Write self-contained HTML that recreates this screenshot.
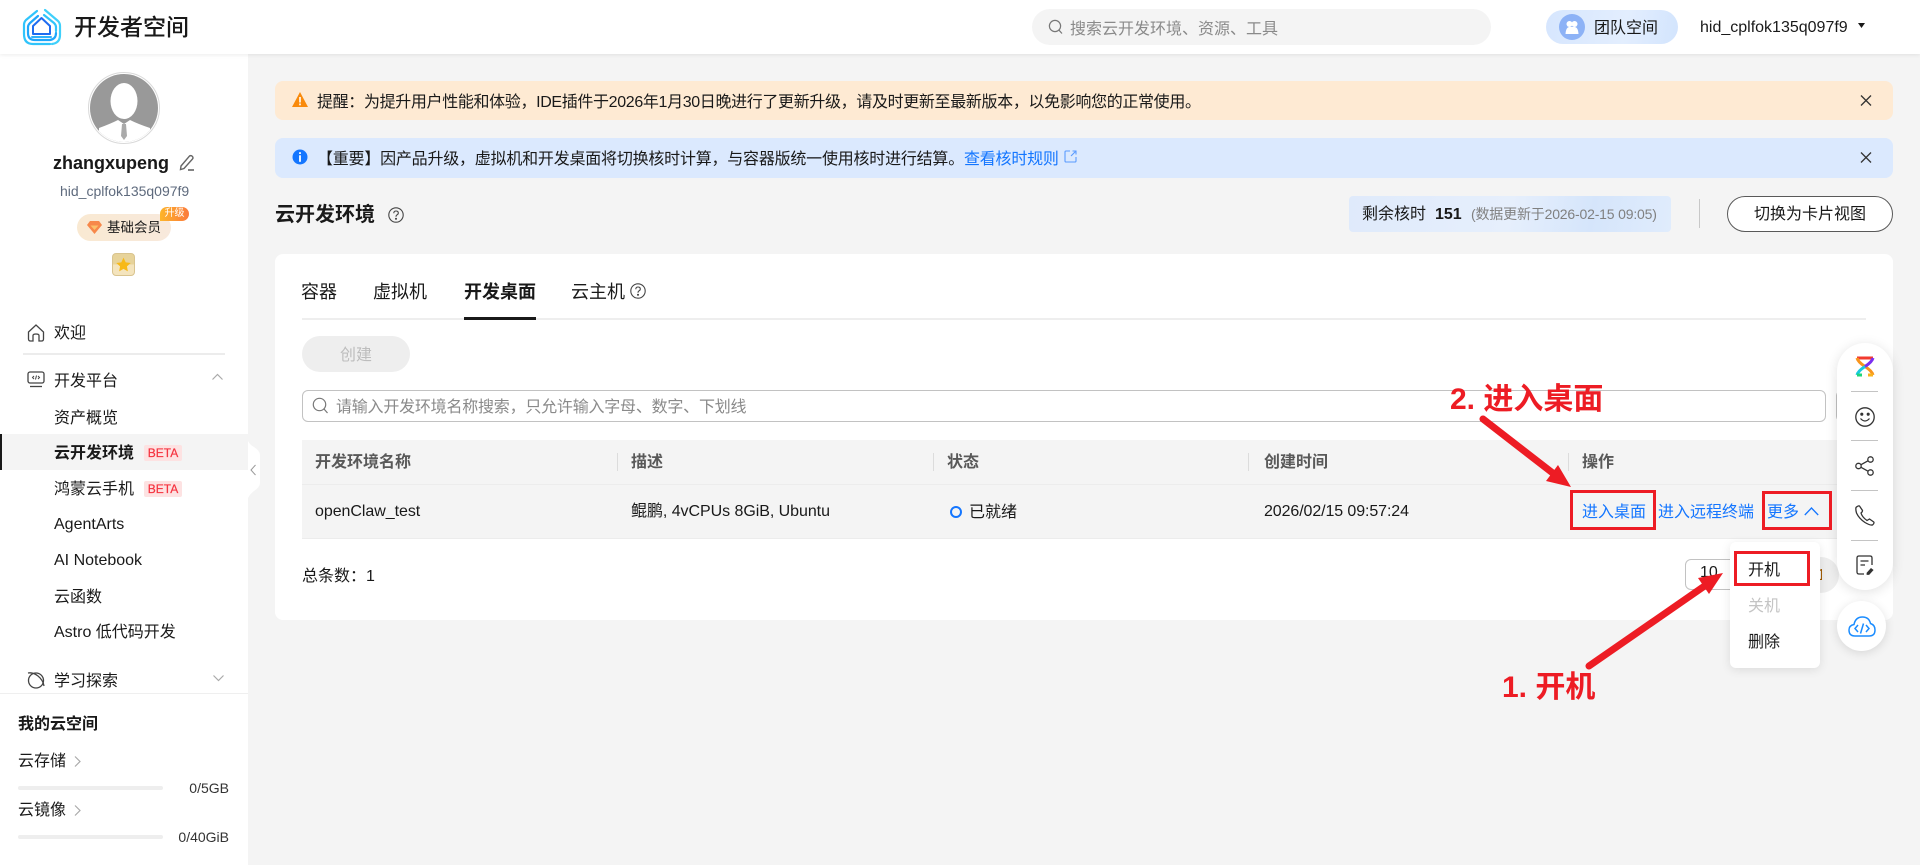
<!DOCTYPE html>
<html lang="zh-CN">
<head>
<meta charset="utf-8">
<title>开发者空间</title>
<style>
*{box-sizing:border-box;margin:0;padding:0}
html,body{width:1920px;height:865px;overflow:hidden;background:#f4f4f4}
body{position:relative;font-family:"Liberation Sans","Noto Sans CJK SC",sans-serif;font-size:16px;color:#191919}
.a{position:absolute}
.t{position:absolute;white-space:nowrap;line-height:20px;height:20px}
.b{font-weight:700}
.beta{position:absolute;left:144px;width:38px;height:16px;background:#fde2e2;color:#f5323f;font-size:12px;line-height:16px;text-align:center;border-radius:2px;-webkit-text-stroke:.2px #f5323f}
.th{color:#595959;font-weight:700}
.sep{position:absolute;width:1px;background:#dcdcdc}
.lnk{color:#1476ff}
.rb{position:absolute;border:3px solid #ed1c24}
.red{position:absolute;white-space:nowrap;color:#ed1c24;font-weight:700;font-size:30px;line-height:36px;height:36px}
.fd{position:absolute;left:1851px;width:27px;height:1px;background:#c4c4c4}
svg{position:absolute;overflow:visible}
</style>
</head>
<body>

<!-- sidebar -->
<div class="a" style="left:0;top:54px;width:248px;height:811px;background:#fff"></div>

<!-- header -->
<div class="a" style="left:0;top:0;width:1920px;height:54px;background:#fff;box-shadow:0 1px 4px rgba(0,0,0,.08)"></div>
<svg style="left:23px;top:9px" width="38" height="36" viewBox="0 0 38 36" fill="none" stroke-linejoin="round" stroke-linecap="round">
<path d="M14 2 L3 11 Q1 13 1 16 V25 Q1 35 10 35 H24 Q27 35 27 35" stroke="#30c4fb" stroke-width="2.200"/>
<path d="M22 1 L35 12 Q37 14 37 17 V26 Q37 34 29 35" stroke="#3fd0fb" stroke-width="2.200"/>
<path d="M15 7 L7 14 Q5 16 5 18 V24 Q5 31 12 31 H27 Q33 30 33 24" stroke="#1ea6fb" stroke-width="2.200"/>
<path d="M21 6 L31 14 Q33 16 33 18 V22" stroke="#30c4fb" stroke-width="2.200"/>
<path d="M10 25 V17 L18.500 9 L27 17 V25 Z" stroke="#1e6cf0" stroke-width="2"/>
<path d="M9 28 H28" stroke="#2fb2fb" stroke-width="2"/>
</svg>
<div class="t" style="left:74px;top:14px;height:26px;line-height:26px;font-size:23px;font-weight:500;color:#191919">开发者空间</div>

<div class="a" style="left:1032px;top:9px;width:459px;height:36px;background:#f4f4f4;border-radius:18px"></div>
<svg style="left:1048px;top:19px" width="16" height="16" viewBox="0 0 16 16" fill="none" stroke="#777" stroke-width="1.200"><circle cx="7" cy="7" r="5.600"/><path d="M11 11.200 L14 14.500"/></svg>
<div class="t" style="left:1070px;top:20px;color:#8a8a8a">搜索云开发环境、资源、工具</div>

<div class="a" style="left:1546px;top:10px;width:132px;height:34px;border-radius:17px;background:linear-gradient(100deg,#d6e6fe,#e3eefe 60%,#d2e4fd)"></div>
<div class="a" style="left:1559px;top:14px;width:26px;height:26px;border-radius:50%;background:#8db2f6"></div>
<svg style="left:1564px;top:19px" width="16" height="16" viewBox="0 0 16 16" fill="#fff"><circle cx="5.500" cy="5" r="3"/><circle cx="10.500" cy="5" r="3"/><path d="M1.500 15 Q2 8 5.500 8 H10.500 Q14 8 14.500 15 Z"/></svg>
<div class="t" style="left:1594px;top:19px;color:#191919">团队空间</div>
<div class="t" style="left:1700px;top:18px;color:#191919;font-size:16px">hid_cplfok135q097f9</div>
<svg style="left:1858px;top:23px" width="7" height="5" viewBox="0 0 7 5"><path d="M0 0 H7 L3.500 5 Z" fill="#191919"/></svg>

<!-- profile -->
<div class="a" style="left:88px;top:72px;width:72px;height:72px;border-radius:50%;border:1px solid #d9d9d9;background:#fff"></div>
<svg style="left:90px;top:74px" width="68" height="68" viewBox="0 0 68 68">
<clipPath id="av"><circle cx="34" cy="34" r="34"/></clipPath>
<g clip-path="url(#av)"><rect width="68" height="68" fill="#999"/>
<ellipse cx="34" cy="27" rx="13.500" ry="18" fill="#fff"/>
<path d="M9 68 V54 Q20 50 28 46 L34 50 L40 46 Q48 50 60 54 V68 Z" fill="#fff"/>
<path d="M32 50 H36 L37 62 L34 66 L31 62 Z" fill="#aaa"/></g>
</svg>
<div class="t b" style="left:53px;top:153px;font-size:18px;color:#191919">zhangxupeng</div>
<svg style="left:179px;top:154px" width="16" height="17" viewBox="0 0 16 17" fill="none" stroke="#666" stroke-width="1.400"><path d="M2 12 L10.500 2 Q12 1 13.500 2.500 Q14.500 4 13.500 5 L5 14.500 L1.500 15.500 Z"/><path d="M9 16 H15" stroke-width="1.600"/></svg>
<div class="t" style="left:60px;top:181px;font-size:14px;color:#5e6a7d">hid_cplfok135q097f9</div>
<div class="a" style="left:77px;top:214px;width:94px;height:27px;border-radius:14px;background:linear-gradient(90deg,#f9e9d2,#f8e9dc)"></div>
<svg style="left:87px;top:221px" width="15" height="13" viewBox="0 0 15 13"><path d="M3 0 H12 L15 4 L7.500 13 L0 4 Z" fill="#f7884a"/><path d="M3.500 4.500 H11.500 L7.500 9 Z" fill="#fbc06a"/></svg>
<div class="t" style="left:107px;top:218px;font-size:13.500px;color:#191919">基础会员</div>
<div class="a" style="left:160px;top:207px;width:29px;height:14px;border-radius:7px 7px 7px 0;background:linear-gradient(90deg,#fdb52a,#fb7a3c);color:#fff;font-size:10px;line-height:14px;text-align:center">升级</div>
<div class="a" style="left:112px;top:253px;width:23px;height:23px;border-radius:4px;border:1px solid #d9c48f;background:linear-gradient(180deg,#e7d39a 50%,#f4e4bd 50%)"></div>
<svg style="left:116px;top:257px" width="15" height="15" viewBox="0 0 24 24"><path d="M12 1 L15.500 8.500 L23.500 9.500 L17.500 15 L19 23 L12 19 L5 23 L6.500 15 L.5 9.500 L8.500 8.500 Z" fill="#f7b917"/></svg>

<!-- menu -->
<svg style="left:27px;top:324px" width="18" height="18" viewBox="0 0 18 18" fill="none" stroke="#444" stroke-width="1.300"><path d="M1.500 8 L9 1 L16.500 8 V15 Q16.500 17 14.500 17 H12 V11.500 Q12 10 9 10 Q6 10 6 11.500 V17 H3.500 Q1.500 17 1.500 15 Z"/></svg>
<div class="t" style="left:54px;top:324px">欢迎</div>
<div class="a" style="left:23px;top:353px;width:202px;height:2px;background:#ececec"></div>
<svg style="left:27px;top:371px" width="18" height="17" viewBox="0 0 18 17" fill="none" stroke="#444" stroke-width="1.300"><rect x="1" y="1" width="16" height="11" rx="2"/><path d="M3 15.500 H15"/><path d="M7 5 L5.500 6.500 L7 8 M11 5 L12.500 6.500 L11 8 M9.500 4.500 L8.500 8.500" stroke-width="1"/></svg>
<div class="t" style="left:54px;top:372px">开发平台</div>
<svg style="left:212px;top:374px" width="11" height="6" viewBox="0 0 11 6" fill="none" stroke="#aaa" stroke-width="1.200"><path d="M.5 5.500 L5.500 .5 L10.500 5.500"/></svg>
<div class="t" style="left:54px;top:409px">资产概览</div>
<div class="a" style="left:0;top:434px;width:248px;height:36px;background:#f4f4f4"></div>
<div class="a" style="left:0;top:434px;width:2px;height:36px;background:#191919"></div>
<div class="t b" style="left:54px;top:444px">云开发环境</div>
<div class="beta" style="top:445px">BETA</div>
<div class="t" style="left:54px;top:480px">鸿蒙云手机</div>
<div class="beta" style="top:481px">BETA</div>
<div class="t" style="left:54px;top:515px">AgentArts</div>
<div class="t" style="left:54px;top:551px">AI Notebook</div>
<div class="t" style="left:54px;top:588px">云函数</div>
<div class="t" style="left:54px;top:623px">Astro 低代码开发</div>
<svg style="left:27px;top:671px" width="18" height="18" viewBox="0 0 18 18" fill="none" stroke="#444" stroke-width="1.300"><circle cx="9" cy="9.500" r="7.500"/><path d="M1 2 Q6 1 11 5 Q16 9 17 15" /></svg>
<div class="t" style="left:54px;top:672px">学习探索</div>
<svg style="left:213px;top:675px" width="11" height="6" viewBox="0 0 11 6" fill="none" stroke="#aaa" stroke-width="1.200"><path d="M.5 .5 L5.500 5.500 L10.500 .5"/></svg>

<div class="a" style="left:0;top:693px;width:248px;height:172px;background:#fff;border-top:1px solid #efefef"></div>
<div class="t b" style="left:18px;top:715px">我的云空间</div>
<div class="t" style="left:18px;top:752px">云存储</div>
<svg style="left:74px;top:756px" width="7" height="11" viewBox="0 0 7 11" fill="none" stroke="#aaa" stroke-width="1.200"><path d="M1 .5 L6 5.500 L1 10.500"/></svg>
<div class="a" style="left:18px;top:786px;width:145px;height:4px;border-radius:2px;background:#eeeeee"></div>
<div class="t" style="right:1691px;top:778px;font-size:14px;color:#333">0/5GB</div>
<div class="t" style="left:18px;top:801px">云镜像</div>
<svg style="left:74px;top:805px" width="7" height="11" viewBox="0 0 7 11" fill="none" stroke="#aaa" stroke-width="1.200"><path d="M1 .5 L6 5.500 L1 10.500"/></svg>
<div class="a" style="left:18px;top:835px;width:145px;height:4px;border-radius:2px;background:#eeeeee"></div>
<div class="t" style="right:1691px;top:827px;font-size:14px;color:#333">0/40GiB</div>

<!-- collapse tab -->
<svg style="left:248px;top:441px" width="12" height="57" viewBox="0 0 12 57"><path d="M0 0 Q2 4 6 6 Q12 10 12 14 V42 Q12 46 6 50 Q2 53 0 57 Z" fill="#fff"/><path d="M7.500 24 L3 29 L7.500 34" fill="none" stroke="#999" stroke-width="1"/></svg>

<!-- alerts -->
<div class="a" style="left:275px;top:81px;width:1618px;height:39px;background:#feead3;border-radius:8px"></div>
<svg style="left:292px;top:92px" width="16" height="15" viewBox="0 0 16 15"><path d="M8 0 L16 15 H0 Z" fill="#f98a0b"/><rect x="7.200" y="5" width="1.600" height="5.500" fill="#fff"/><rect x="7.200" y="11.500" width="1.600" height="1.800" fill="#fff"/></svg>
<div class="t" style="left:317px;top:93px;color:#191919;letter-spacing:-.35px">提醒：为提升用户性能和体验，IDE插件于2026年1月30日晚进行了更新升级，请及时更新至最新版本，以免影响您的正常使用。</div>
<svg style="left:1860px;top:95px" width="12" height="11" viewBox="0 0 12 11" stroke="#333" stroke-width="1.300"><path d="M1 .5 L11 10.500 M11 .5 L1 10.500"/></svg>

<div class="a" style="left:275px;top:138px;width:1618px;height:40px;background:#dbe9fe;border-radius:8px"></div>
<svg style="left:292px;top:149px" width="16" height="16" viewBox="0 0 16 16"><circle cx="8" cy="8" r="7.500" fill="#1476ff"/><rect x="7.100" y="3.200" width="1.800" height="1.800" fill="#fff"/><rect x="7.100" y="6.300" width="1.800" height="6.500" fill="#fff"/></svg>
<div class="t" style="left:317px;top:150px;color:#191919;letter-spacing:-.22px">【重要】因产品升级，虚拟机和开发桌面将切换核时计算，与容器版统一使用核时进行结算。<span class="lnk">查看核时规则</span></div>
<svg style="left:1064px;top:150px" width="13" height="13" viewBox="0 0 13 13" fill="none" stroke="#5a9bff" stroke-width="1.100"><path d="M6 1 H2 Q1 1 1 2 V11 Q1 12 2 12 H11 Q12 12 12 11 V7"/><path d="M7 6 L12 1 M8.500 1 H12 V4.500"/></svg>
<svg style="left:1860px;top:152px" width="12" height="11" viewBox="0 0 12 11" stroke="#333" stroke-width="1.300"><path d="M1 .5 L11 10.500 M11 .5 L1 10.500"/></svg>

<!-- title row -->
<div class="t b" style="left:275px;top:203px;height:24px;line-height:24px;font-size:20px;color:#191919">云开发环境</div>
<svg style="left:388px;top:207px" width="16" height="16" viewBox="0 0 16 16" fill="none" stroke="#444" stroke-width="1.100"><circle cx="8" cy="8" r="7.200"/><path d="M5.800 6.200 Q5.800 4 8 4 Q10.300 4 10.300 6 Q10.300 7.300 8.800 8 Q8 8.400 8 9.800"/><circle cx="8" cy="11.800" r=".5" fill="#444"/></svg>

<div class="a" style="left:1349px;top:196px;width:322px;height:36px;border-radius:4px;background:linear-gradient(100deg,#dfeafb,#e6effc 50%,#d5e5fb 75%,#e0ecfc)"></div>
<div class="t" style="left:1362px;top:205px">剩余核时</div>
<div class="t b" style="left:1435px;top:205px">151</div>
<div class="t" style="left:1471px;top:204px;font-size:14px;color:#808080;letter-spacing:-.18px">(数据更新于2026-02-15 09:05)</div>
<div class="a" style="left:1699px;top:199px;width:1px;height:29px;background:#c8c8c8"></div>
<div class="a" style="left:1727px;top:196px;width:166px;height:36px;border:1px solid #595959;border-radius:18px;background:#fff;text-align:center;line-height:36px;color:#191919">切换为卡片视图</div>

<!-- card -->
<div class="a" style="left:275px;top:254px;width:1618px;height:366px;background:#fff;border-radius:8px"></div>
<div class="t" style="left:301px;top:280px;height:24px;line-height:24px;font-size:18px">容器</div>
<div class="t" style="left:373px;top:280px;height:24px;line-height:24px;font-size:18px">虚拟机</div>
<div class="t b" style="left:464px;top:280px;height:24px;line-height:24px;font-size:18px">开发桌面</div>
<div class="t" style="left:571px;top:280px;height:24px;line-height:24px;font-size:18px">云主机</div>
<svg style="left:630px;top:283px" width="16" height="16" viewBox="0 0 16 16" fill="none" stroke="#444" stroke-width="1.100"><circle cx="8" cy="8" r="7.200"/><path d="M5.800 6.200 Q5.800 4 8 4 Q10.300 4 10.300 6 Q10.300 7.300 8.800 8 Q8 8.400 8 9.800"/><circle cx="8" cy="11.800" r=".5" fill="#444"/></svg>
<div class="a" style="left:302px;top:318px;width:1564px;height:2px;background:#eeeeee"></div>
<div class="a" style="left:464px;top:317px;width:72px;height:3px;background:#191919"></div>

<div class="a" style="left:302px;top:336px;width:108px;height:36px;border-radius:18px;background:#eeeeee;text-align:center;line-height:39px;color:#bdbdbd">创建</div>

<div class="a" style="left:302px;top:390px;width:1524px;height:32px;border:1px solid #c2c2c2;border-radius:6px;background:#fff"></div>
<svg style="left:312px;top:397px" width="17" height="17" viewBox="0 0 17 17" fill="none" stroke="#777" stroke-width="1.200"><circle cx="7.500" cy="7.500" r="6.200"/><path d="M12 12 L15.500 16"/></svg>
<div class="t" style="left:336px;top:398px;color:#8a8a8a;letter-spacing:-.22px">请输入开发环境名称搜索，只允许输入字母、数字、下划线</div>
<div class="a" style="left:1836px;top:390px;width:30px;height:32px;border:1px solid #c2c2c2;border-radius:6px;background:#fff"></div>

<!-- table -->
<div class="a" style="left:302px;top:440px;width:1564px;height:99px;background:#f4f4f4;border-bottom:1px solid #ececec"></div>
<div class="a" style="left:302px;top:484px;width:1564px;height:1px;background:#ececec"></div>
<div class="t th" style="left:315px;top:453px">开发环境名称</div>
<div class="sep" style="left:617px;top:453px;height:18px"></div>
<div class="t th" style="left:631px;top:453px">描述</div>
<div class="sep" style="left:933px;top:453px;height:18px"></div>
<div class="t th" style="left:947px;top:453px">状态</div>
<div class="sep" style="left:1248px;top:453px;height:18px"></div>
<div class="t th" style="left:1264px;top:453px">创建时间</div>
<div class="sep" style="left:1568px;top:453px;height:18px"></div>
<div class="t th" style="left:1582px;top:453px">操作</div>

<div class="t" style="left:315px;top:502px;letter-spacing:-.05px">openClaw_test</div>
<div class="t" style="left:631px;top:502px;letter-spacing:-.05px">鲲鹏, 4vCPUs 8GiB, Ubuntu</div>
<div class="a" style="left:950px;top:506px;width:12px;height:12px;border:2.500px solid #1476ff;border-radius:50%"></div>
<div class="t" style="left:969px;top:503px">已就绪</div>
<div class="t" style="left:1264px;top:502px;letter-spacing:-.1px">2026/02/15 09:57:24</div>
<div class="t lnk" style="left:1582px;top:503px">进入桌面</div>
<div class="t lnk" style="left:1658px;top:503px">进入远程终端</div>
<div class="t lnk" style="left:1767px;top:503px">更多</div>
<svg style="left:1804px;top:507px" width="15" height="9" viewBox="0 0 15 9" fill="none" stroke="#1476ff" stroke-width="1.300"><path d="M.8 8 L7.500 1 L14.200 8"/></svg>

<div class="t" style="left:302px;top:567px;color:#191919">总条数：1</div>

<!-- pagination -->
<div class="a" style="left:1685px;top:559px;width:60px;height:31px;border:1px solid #c2c2c2;border-radius:6px;background:#fff"></div>
<div class="t" style="left:1700px;top:563px">10</div>
<div class="a" style="left:1803px;top:557px;width:36px;height:36px;border-radius:50%;background:#eeeeee"></div>
<div class="t" style="left:1817px;top:566px;overflow:hidden;width:5px;color:#a05a00">1</div>

<!-- dropdown -->
<div class="a" style="left:1730px;top:542px;width:90px;height:126px;background:#fff;border-radius:6px;box-shadow:0 2px 10px rgba(0,0,0,.10)"></div>
<div class="t" style="left:1748px;top:561px">开机</div>
<div class="t" style="left:1748px;top:597px;color:#c4c4c4">关机</div>
<div class="t" style="left:1748px;top:633px">删除</div>

<!-- floating bar -->
<div class="a" style="left:1837px;top:343px;width:56px;height:247px;border-radius:28px;background:#fff;box-shadow:0 2px 12px rgba(0,0,0,.12)"></div>
<svg style="left:1855px;top:356px" width="20" height="21" viewBox="0 0 20 21" fill="none" stroke-width="3">
<path d="M2 2 H18" stroke="#f23a2f"/>
<path d="M2 2 Q3 6 10 10.500 Q17 15 18 19" stroke="#f9951d"/>
<path d="M18 2 Q17 6 10 10.500" stroke="#7b2ff0"/>
<path d="M10 10.500 Q3 15 2 19" stroke="#19c9e0"/>
<path d="M2 19 H7" stroke="#1ed67a"/>
<path d="M13 19 H18" stroke="#f9b31d"/>
</svg>
<div class="fd" style="top:391px"></div>
<svg style="left:1855px;top:407px" width="20" height="20" viewBox="0 0 20 20" fill="none" stroke="#333" stroke-width="1.300"><circle cx="10" cy="10" r="9.200"/><path d="M5.500 11.500 Q10 16.500 14.500 11.500"/><circle cx="6.800" cy="7.200" r=".9" fill="#333"/><circle cx="13.200" cy="7.200" r=".9" fill="#333"/></svg>
<div class="fd" style="top:440px"></div>
<svg style="left:1855px;top:456px" width="20" height="20" viewBox="0 0 20 20" fill="none" stroke="#333" stroke-width="1.300"><circle cx="3.500" cy="10" r="2.700"/><circle cx="15.500" cy="3.500" r="2.700"/><circle cx="15.500" cy="16.500" r="2.700"/><path d="M6 8.700 L13 4.800 M6 11.300 L13 15.200"/></svg>
<div class="fd" style="top:490px"></div>
<svg style="left:1855px;top:505px" width="20" height="21" viewBox="0 0 20 21" fill="none" stroke="#333" stroke-width="1.300"><path d="M1 2.500 Q3 .5 4.500 1 L7.500 5.500 Q7.500 7 6 8 Q7 12 12 15.500 L14.500 14 L18.800 17 Q19.500 18.500 17.500 20 Q15 20.500 10 17.500 Q4 13.500 1.500 8 Q.5 4.500 1 2.500 Z"/></svg>
<div class="fd" style="top:540px"></div>
<svg style="left:1856px;top:555px" width="18" height="20" viewBox="0 0 18 20" fill="none" stroke="#333" stroke-width="1.300"><path d="M8 19 H3 Q1 19 1 17 V3 Q1 1 3 1 H14 Q16 1 16 3 V10"/><path d="M4.500 6 H12.500 M4.500 10 H9"/><path d="M11 18 L15 13.500 L17 15 L13 19.500 H11 Z" fill="#333" stroke-width=".8"/></svg>

<div class="a" style="left:1837px;top:601px;width:49px;height:50px;border-radius:50%;background:#fff;box-shadow:0 2px 10px rgba(0,0,0,.12)"></div>
<svg style="left:1848px;top:616px" width="28" height="21" viewBox="0 0 28 21" fill="none" stroke="#1a8cff" stroke-width="1.500"><path d="M7 20 Q1 20 1 14 Q1 9.500 6 8.500 Q7.500 1 14.500 1 Q21 1 22.500 7.500 Q27 9 27 14 Q27 20 21 20 Z"/><path d="M10 9 L7 12.500 L10 16 M18 9 L21 12.500 L18 16 M15.500 7.500 L12.500 17.500"/></svg>

<!-- annotations -->
<svg style="left:0;top:0" width="1920" height="865" viewBox="0 0 1920 865">
<path d="M1483 419 L1554 474" stroke="#ed1c24" stroke-width="7" stroke-linecap="round"/>
<path d="M1571 487 L1558 465 L1546 481 Z" fill="#ed1c24"/>
<path d="M1589 666 L1706 585" stroke="#ed1c24" stroke-width="7" stroke-linecap="round"/>
<path d="M1723 573 L1698 578 L1709 594 Z" fill="#ed1c24"/>
</svg>
<div class="rb" style="left:1570px;top:490px;width:86px;height:40px"></div>
<div class="rb" style="left:1762px;top:491px;width:70px;height:39px"></div>
<div class="rb" style="left:1734px;top:551px;width:76px;height:35px"></div>
<div class="red" style="left:1450px;top:382px">2. 进入桌面</div>
<div class="red" style="left:1502px;top:670px">1. 开机</div>

</body>
</html>
